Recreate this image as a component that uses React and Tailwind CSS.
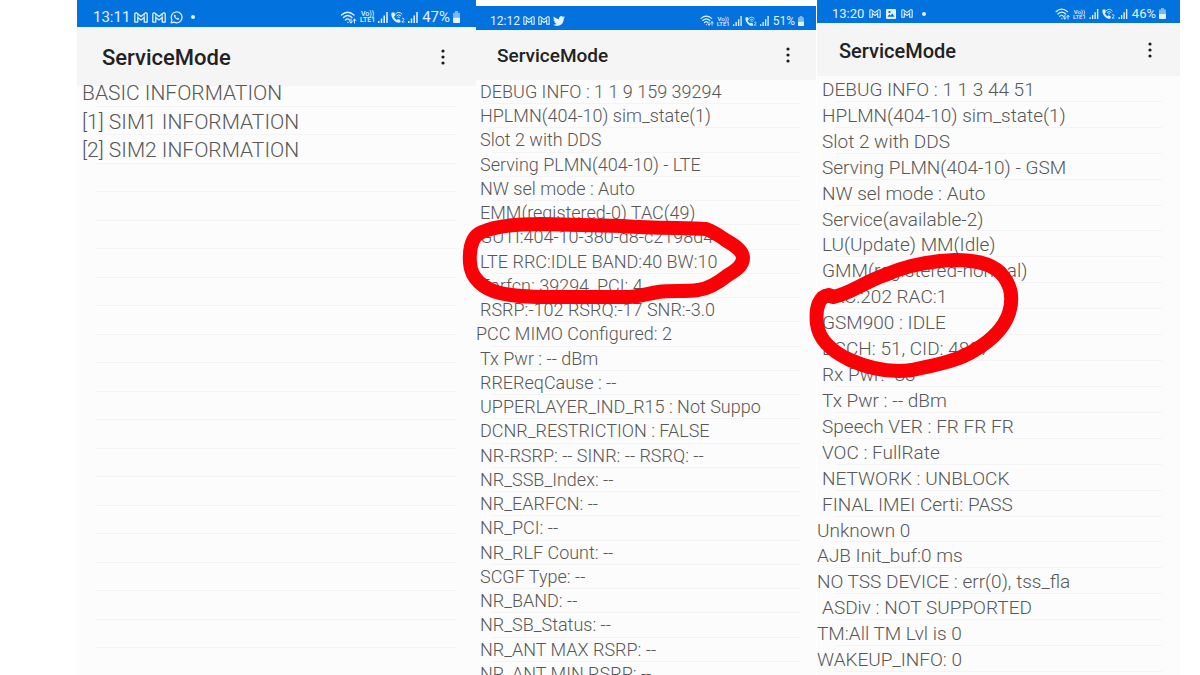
import React from "react";

const GmailIcon = ({ className }) => (
  <svg viewBox="0 0 26 20" className={className} fill="none" stroke="currentColor" strokeWidth="2.400" strokeLinejoin="round" aria-hidden="true">
    <path d="M1.5 18.5V3.5q0-2 2-2h1.500L13 8l8-6.500h1.500q2 0 2 2v15h-5.500V10L13 14.500 7 10v8.500z" />
    <path d="M7 10V3M19 10V3" strokeWidth="1.600" />
  </svg>
);

const WhatsAppIcon = ({ className }) => (
  <svg viewBox="0 0 24 24" className={className} fill="none" stroke="currentColor" strokeWidth="2.200" aria-hidden="true">
    <path d="M2 22l1.500-5.600A10 10 0 1 1 7.600 20.500z" strokeLinejoin="round" />
    <path d="M8.300 7c-1.500 1-1.300 3.500 1 6s5 4 7 2.500c.7-.6.8-1.500.6-1.800l-2.300-1.200-1.300 1.300c-1.600-.6-2.800-1.800-3.400-3.200l1-1.300L9.200 7z" fill="currentColor" stroke="none" />
  </svg>
);

const TwitterIcon = ({ className }) => (
  <svg viewBox="0 0 24 24" className={className} fill="currentColor" aria-hidden="true">
    <path d="M23.950 4.570a10 10 0 0 1-2.820.770 4.960 4.960 0 0 0 2.160-2.720c-.95.550-2 .950-3.130 1.180a4.920 4.920 0 0 0-8.380 4.480C7.690 8.090 4.070 6.130 1.640 3.160a4.820 4.820 0 0 0-.67 2.470c0 1.710.870 3.210 2.190 4.100a4.900 4.900 0 0 1-2.230-.620v.060a4.920 4.920 0 0 0 3.950 4.830 5 5 0 0 1-2.210.080 4.940 4.940 0 0 0 4.600 3.420A9.870 9.870 0 0 1 0 19.540a13.990 13.990 0 0 0 7.560 2.210c9.050 0 13.990-7.500 13.990-13.980 0-.21 0-.42-.02-.63a9.940 9.940 0 0 0 2.460-2.550z" />
  </svg>
);

const ImageIcon = ({ className }) => (
  <svg viewBox="0 0 20 20" className={className} aria-hidden="true">
    <path fillRule="evenodd" fill="currentColor" d="M2 0h16a2 2 0 0 1 2 2v16a2 2 0 0 1-2 2H2a2 2 0 0 1-2-2V2a2 2 0 0 1 2-2zm1 15.500h14L12.500 9 9 13l-2.500-2.500zM5 4v4h4V4z" />
  </svg>
);

const DotIcon = ({ className }) => (
  <svg viewBox="0 0 4 4" className={className} fill="currentColor" aria-hidden="true">
    <circle cx="2" cy="2" r="2" />
  </svg>
);

const WifiIcon = ({ className }) => (
  <svg viewBox="0 0 32 26" className={className} fill="none" stroke="currentColor" strokeWidth="2.600" strokeLinecap="round" aria-hidden="true">
    <path d="M2 8Q14-3 27 8M6 13q8-8 17 0M10 18q4-4.500 8 0" />
    <path d="M14 22.500l1.500.5M21 16v8m-2.500-3l2.500 3 2.500-3M28 24v-8m-2.500 3l2.500-3 2.500 3" strokeWidth="2" />
  </svg>
);

const SignalIcon = ({ className }) => (
  <svg viewBox="0 0 20 22" className={className} fill="currentColor" aria-hidden="true">
    <path d="M0 18h3v4H0zM5.500 13h3v9h-3zM11 7h3v15h-3zM16.500 0h3v22h-3z" />
  </svg>
);

const WifiCallIcon = ({ className }) => (
  <svg viewBox="0 0 28 24" className={className} fill="none" stroke="currentColor" strokeWidth="2" aria-hidden="true">
    <path d="M1.500 3C-1 8 2 14.500 6.500 19s9.500 5.500 12.500 3.500l-.5-4.500-4.500-2-2.500 2C9 16.500 7 14 6 11l2.500-2L7 3z" fill="currentColor" stroke="none" />
    <path d="M9 6Q15.500-1 22 6M11.500 9.500q4-4.500 8 0M14 12.500q1.500-1.500 3 0" strokeLinecap="round" />
    <path d="M21.500 15.500q2-2 3.800-.5t-.3 3.500l-3.500 3.500h5.500" strokeWidth="1.800" />
  </svg>
);

const BatteryIcon = ({ className }) => (
  <svg viewBox="0 0 14 22" className={className} fill="currentColor" preserveAspectRatio="none" aria-hidden="true">
    <path d="M4 0h6v3h2.500q1.500 0 1.500 1.500V12H0V4.500Q0 3 1.500 3H4z" opacity=".55" />
    <path d="M0 12h14v8.500q0 1.500-1.500 1.500h-11Q0 22 0 20.500z" />
  </svg>
);

const VoLte = ({ className }) => (
  <span className={`flex flex-col items-center font-medium ${className}`}>
    <span>Vo))</span>
    <span>LTE1</span>
  </span>
);

const iconSet = {
  mail: GmailIcon,
  whatsapp: WhatsAppIcon,
  twitter: TwitterIcon,
  image: ImageIcon,
  dot: DotIcon,
};

const phones = [
  {
    time: "13:11",
    battery: "47%",
    notices: [
      ["mail", "w-[14px] h-[11px]"],
      ["mail", "w-[14px] h-[11px]"],
      ["whatsapp", "size-[13px]"],
      ["dot", "size-1 ml-1"],
    ],
    frame: "",
    status: "h-[27px] pl-4 pr-4 pt-[7px] text-[15px] leading-5",
    left: "gap-1",
    right: "gap-[3px]",
    volte: "text-[7px] leading-[6px]",
    wifi: "w-[17px] h-[13px]",
    signal: "w-[10px] h-[11px]",
    call: "w-[14px] h-[12px]",
    cell: "w-[7px] h-[12px]",
    header: "h-[59px] pl-[25px] pr-[23px] text-[22px] leading-[62px]",
    dots: "mt-[21px]",
    list: "-mt-[8px] h-[599px] text-[21px] leading-[30px]",
    pad: "pl-[5px]",
    line: "left-[19px] right-[19px]",
    rows: ["BASIC INFORMATION", "[1] SIM1 INFORMATION", "[2] SIM2 INFORMATION", ...Array(18).fill("")],
  },
  {
    time: "12:12",
    battery: "51%",
    notices: [
      ["mail", "w-[12px] h-[9px]"],
      ["mail", "w-[12px] h-[9px]"],
      ["twitter", "size-[12px]"],
    ],
    frame: "pt-[6px] border-r border-white",
    status: "h-[24px] pl-[14px] pr-3 pt-[5px] text-[12px] leading-5",
    left: "gap-[3px]",
    right: "gap-[3px]",
    volte: "text-[6px] leading-[5px]",
    wifi: "w-[14px] h-[11px]",
    signal: "w-[9px] h-[10px]",
    call: "w-[12px] h-[10px]",
    cell: "w-[6px] h-[10px]",
    header: "h-[50px] pl-[21px] pr-[18px] text-[19px] leading-[52px]",
    dots: "mt-[16px]",
    list: "h-[606px] text-[18px] leading-[24px]",
    pad: "pl-1",
    line: "left-[16px] right-[16px]",
    rows: [
      "DEBUG INFO : 1 1 9 159 39294",
      "HPLMN(404-10) sim_state(1)",
      "Slot 2 with DDS",
      "Serving PLMN(404-10) - LTE",
      "NW sel mode : Auto",
      "EMM(registered-0) TAC(49)",
      "GUTI:404-10-380-d8-c2198d4",
      "LTE RRC:IDLE BAND:40 BW:10",
      "Earfcn: 39294, PCI: 4",
      "RSRP:-102 RSRQ:-17 SNR:-3.0",
      "<PCC MIMO Configured: 2",
      "Tx Pwr : -- dBm",
      "RREReqCause : --",
      "UPPERLAYER_IND_R15 : Not Suppo",
      "DCNR_RESTRICTION : FALSE",
      "NR-RSRP: -- SINR: -- RSRQ: --",
      "NR_SSB_Index: --",
      "NR_EARFCN: --",
      "NR_PCI: --",
      "NR_RLF Count: --",
      "SCGF Type: --",
      "NR_BAND: --",
      "NR_SB_Status: --",
      "NR_ANT MAX RSRP: --",
      "NR_ANT MIN RSRP: --",
    ],
  },
  {
    time: "13:20",
    battery: "46%",
    notices: [
      ["mail", "w-[12px] h-[9px]"],
      ["image", "size-[10px]"],
      ["mail", "w-[12px] h-[9px]"],
      ["dot", "size-1 ml-1"],
    ],
    frame: "",
    status: "h-[23px] pl-[15px] pr-[14px] pt-[4px] text-[13px] leading-5",
    left: "gap-[5px]",
    right: "gap-[3px]",
    volte: "text-[6px] leading-[5px]",
    wifi: "w-[15px] h-[12px]",
    signal: "w-[10px] h-[10px]",
    call: "w-[13px] h-[11px]",
    cell: "w-[7px] h-[11px]",
    header: "h-[53px] pl-[22px] pr-[20px] text-[20px] leading-[56px]",
    dots: "mt-[18px]",
    list: "h-[596px] text-[19px] leading-[28px]",
    pad: "pl-[5px]",
    line: "left-[18px] right-[18px]",
    rows: [
      "DEBUG INFO : 1 1 3 44 51",
      "HPLMN(404-10) sim_state(1)",
      "Slot 2 with DDS",
      "Serving PLMN(404-10) - GSM",
      "NW sel mode : Auto",
      "Service(available-2)",
      "LU(Update) MM(Idle)",
      "GMM(registered-normal)",
      "LAC:202 RAC:1",
      "GSM900 : IDLE",
      "BCCH: 51, CID: 4807",
      "Rx Pwr: -83",
      "Tx Pwr : -- dBm",
      "Speech VER : FR FR FR",
      "VOC : FullRate",
      "NETWORK : UNBLOCK",
      "FINAL IMEI Certi: PASS",
      "<Unknown 0",
      "<AJB Init_buf:0 ms",
      "<NO TSS DEVICE : err(0), tss_fla",
      "ASDiv : NOT SUPPORTED",
      "<TM:All TM Lvl is 0",
      "<WAKEUP_INFO: 0",
    ],
  },
];

/* A leading "<" marks a line that starts at the screen edge. */
function Row({ text, pad, line }) {
  const flush = text.startsWith("<");
  return (
    <li className={`relative min-h-0 whitespace-nowrap ${flush ? "" : pad}`}>
      {flush ? text.slice(1) : text}
      <span className={`absolute bottom-0 h-px bg-[#f4f4f4] ${line}`} />
    </li>
  );
}

function Phone({ p }) {
  return (
    <section className={`flex min-w-0 flex-col ${p.frame}`}>
      <div className={`flex items-center justify-between bg-[#0272de] text-[#e2f1ff] ${p.status}`}>
        <div className={`flex items-center ${p.left}`}>
          <span>{p.time}</span>
          {p.notices.map(([name, size], i) => {
            const Icon = iconSet[name];
            return <Icon key={i} className={`shrink-0 ${size}`} />;
          })}
        </div>
        <div className={`flex items-center ${p.right}`}>
          <WifiIcon className={p.wifi} />
          <VoLte className={p.volte} />
          <SignalIcon className={p.signal} />
          <WifiCallIcon className={p.call} />
          <SignalIcon className={p.signal} />
          <span className="ml-px">{p.battery}</span>
          <BatteryIcon className={p.cell} />
        </div>
      </div>
      <header className={`flex items-start justify-between bg-[#f5f5f5] text-[#222222] ${p.header}`}>
        <h1 className="font-medium">ServiceMode</h1>
        <button type="button" aria-label="More options" className={`flex w-5 justify-center ${p.dots}`}>
          <svg viewBox="0 0 4 18" className="h-[18px] w-1" fill="#1c1c1c" aria-hidden="true">
            <circle cx="2" cy="3" r="1.600" />
            <circle cx="2" cy="9" r="1.600" />
            <circle cx="2" cy="15" r="1.600" />
          </svg>
        </button>
      </header>
      <div className="flex-1 bg-[#fcfcfc]">
        <ul className={`grid auto-rows-fr font-light text-[#575757] ${p.list}`}>
          {p.rows.map((text, i) => (
            <Row key={i} text={text} pad={p.pad} line={p.line} />
          ))}
        </ul>
      </div>
    </section>
  );
}

export default function App() {
  return (
    <main className="relative h-screen overflow-hidden bg-white pl-[77px] pr-5 font-[Roboto,sans-serif]">
      <div className="grid min-h-full grid-cols-[399fr_341fr_363fr]">
        {phones.map((p) => (
          <Phone key={p.time} p={p} />
        ))}
      </div>
      <svg viewBox="0 0 1200 675" className="pointer-events-none absolute inset-0 h-full w-full" fill="none" stroke="#fb0007" strokeWidth="14" strokeLinejoin="round" strokeLinecap="round" aria-hidden="true">
        <path d="M470 263C469 248 472 236 482 232C495 226 515 224 540 224L622 226C660 229 690 227 706 229C717 233 722 238 727 241C738 247 743 253 743 258C743 266 735 271 728 275C718 283 708 289 698 290C685 292 672 290 658 292C645 294 638 297 625 297L555 297C535 297 515 297 500 293C484 289 471 279 470 263Z" />
        <path d="M833 297C850 294 866 281 885 275C905 266 930 261 955 260C982 260 996 266 1004 277C1012 288 1013 300 1009 313C1004 328 992 340 975 350C958 361 935 365 912 370C890 373 868 368 850 360C833 352 819 340 817 324C815 306 820 296 829 295L833 297" />
      </svg>
    </main>
  );
}
